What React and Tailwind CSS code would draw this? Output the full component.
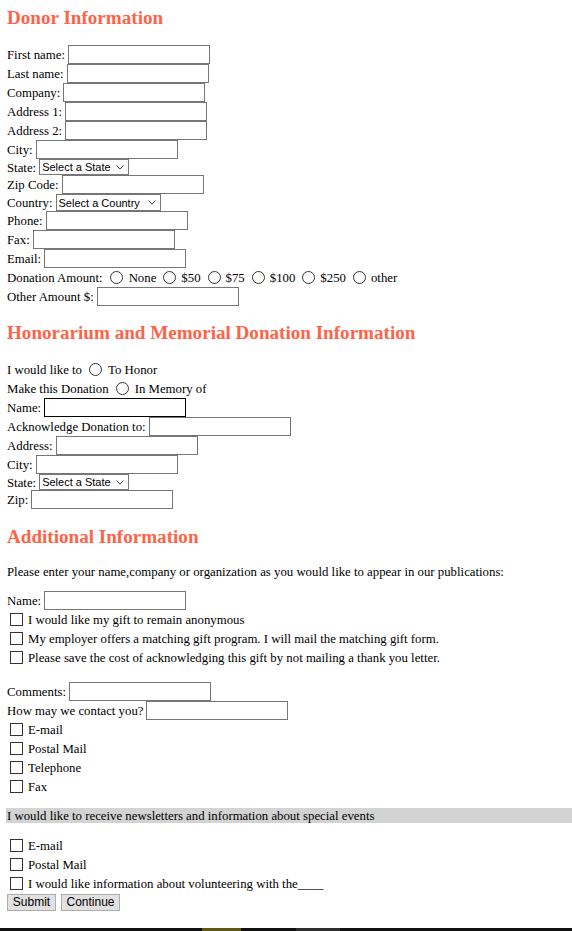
import React from "react";

const Heading = ({ children, className = "" }) => (
  <h2 className={`h-[22px] text-[19.1px] font-bold leading-[22px] text-[#ff6347] ${className}`}>
    {children}
  </h2>
);

const Field = ({ label, dark = false }) => (
  <div className="flex h-[19px] items-center">
    <span className="mt-[2px]">{label}</span>
    <input
      type="text"
      className={
        dark
          ? "ml-[3px] h-[19px] w-[142px] border border-black bg-white"
          : "ml-[3px] h-[19px] w-[142px] border border-[#767676] bg-white"
      }
    />
  </div>
);

const Select = ({ label, placeholder, wide = false, tall = false }) => (
  <div className={tall ? "flex h-[17px] items-center" : "flex h-[16px] items-center"}>
    <span className="mt-[2px]">{label}</span>
    <div className="relative ml-[3px]">
      <select
        className={
          (wide ? "w-[105px] h-[17px]" : "w-[90px] h-[16px]") +
          " appearance-none border border-[#767676] bg-white pl-[2px] font-['Liberation_Sans',sans-serif] text-[11px] leading-[14px] text-black"
        }
      >
        <option>{placeholder}</option>
      </select>
      <svg
        className="pointer-events-none absolute right-[5px] top-[6px]"
        width="8"
        height="5"
        viewBox="0 0 8 5"
        fill="none"
      >
        <path d="M0.5 0.5 L4 4 L7.5 0.5" stroke="#444" strokeWidth="1" />
      </svg>
    </div>
  </div>
);

const Radio = ({ first = false }) => (
  <input
    type="radio"
    className={
      first
        ? "ml-[7px] mr-[6px] h-[13px] w-[13px] appearance-none rounded-full border border-[#333] bg-white"
        : "ml-[7px] mr-[5px] h-[13px] w-[13px] appearance-none rounded-full border border-[#333] bg-white"
    }
  />
);

const Check = ({ label }) => (
  <div className="flex h-[19px] items-center">
    <input
      type="checkbox"
      className="ml-[3px] mr-[5px] h-[13px] w-[13px] appearance-none border border-[#333] bg-white"
    />
    <span className="mt-[2px]">{label}</span>
  </div>
);

const amounts = ["None", "$50", "$75", "$100", "$250", "other"];

export default function App() {
  return (
    <div className="min-h-[931px] bg-white pl-[7px] pt-[7px] font-['Liberation_Serif',serif] text-[12.8px] leading-[15px] text-black">
      <Heading>Donor Information</Heading>

      <div className="mt-[16px] flex flex-col">
        <Field label="First name:" />
        <Field label="Last name:" />
        <Field label="Company:" />
        <Field label="Address 1:" />
        <Field label="Address 2:" />
        <Field label="City:" />
        <Select label="State:" placeholder="Select a State" />
        <Field label="Zip Code:" />
        <Select label="Country:" placeholder="Select a Country" wide tall />
        <Field label="Phone:" />
        <Field label="Fax:" />
        <Field label="Email:" />
        <div className="flex h-[19px] items-center">
          <span className="mt-[2px]">Donation Amount:</span>
          {amounts.map((a, i) => (
            <React.Fragment key={a}>
              <Radio first={i === 0} />
              <span className="mt-[2px]">{a}</span>
            </React.Fragment>
          ))}
        </div>
        <Field label="Other Amount $:" />
      </div>

      <Heading className="mt-[16px]">Honorarium and Memorial Donation Information</Heading>

      <div className="mt-[16px] flex flex-col">
        <div className="flex h-[19px] items-center">
          <span className="mt-[2px]">I would like to</span>
          <Radio first />
          <span className="mt-[2px]">To Honor</span>
        </div>
        <div className="flex h-[19px] items-center">
          <span className="mt-[2px]">Make this Donation</span>
          <Radio first />
          <span className="mt-[2px]">In Memory of</span>
        </div>
        <Field label="Name:" dark />
        <Field label="Acknowledge Donation to:" />
        <Field label="Address:" />
        <Field label="City:" />
        <Select label="State:" placeholder="Select a State" />
        <Field label="Zip:" />
      </div>

      <Heading className="mt-[17px]">Additional Information</Heading>

      <p className="mt-[17px] h-[15px]">
        Please enter your name,company or organization as you would like to appear in our publications:
      </p>

      <div className="mt-[11px] flex flex-col">
        <Field label="Name:" />
        <Check label="I would like my gift to remain anonymous" />
        <Check label="My employer offers a matching gift program. I will mail the matching gift form." />
        <Check label="Please save the cost of acknowledging this gift by not mailing a thank you letter." />
      </div>

      <div className="mt-[15px] flex flex-col">
        <Field label="Comments:" />
        <Field label="How may we contact you?" />
        <Check label="E-mail" />
        <Check label="Postal Mail" />
        <Check label="Telephone" />
        <Check label="Fax" />
      </div>

      <div className="-ml-px mt-[12px] h-[15px] bg-[#d3d3d3] pl-px pt-px leading-[15px]">
        I would like to receive newsletters and information about special events
      </div>

      <div className="mt-[13px] flex flex-col">
        <Check label="E-mail" />
        <Check label="Postal Mail" />
        <Check label="I would like information about volunteering with the____" />
      </div>

      <div className="mt-px flex gap-[5px] font-['Liberation_Sans',sans-serif] text-[12px]">
        <button className="h-[17px] w-[49px] border border-[#adadad] bg-[#e1e1e1] leading-[15px] text-black">
          Submit
        </button>
        <button className="h-[17px] w-[59px] border border-[#adadad] bg-[#e1e1e1] leading-[15px] text-black">
          Continue
        </button>
      </div>

      <div className="-ml-[7px] mt-[17px] flex h-[40px] bg-[#111]">
        <div className="w-[202px]" />
        <div className="w-[39px] bg-[#5c5712]" />
        <div className="w-[55px]" />
        <div className="w-[44px] bg-[#2e2e2e]" />
      </div>
    </div>
  );
}
